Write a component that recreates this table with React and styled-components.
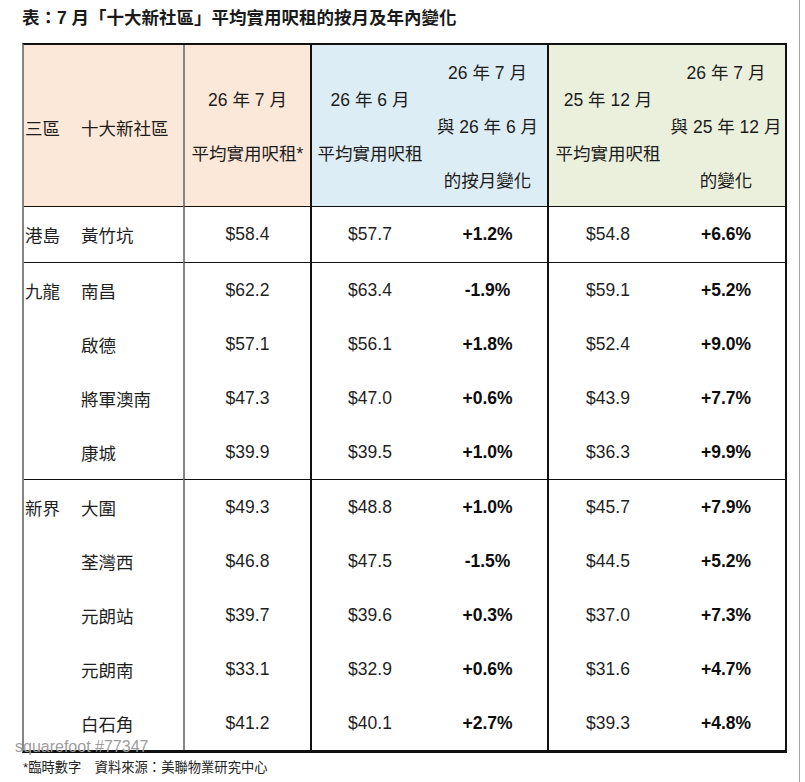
import styled, { createGlobalStyle } from 'styled-components';

const GlobalStyle = createGlobalStyle`
  html, body {
    margin: 0;
    padding: 0;
    background: #fff;
  }
  body {
    font-family: "Liberation Sans", "Noto Sans CJK TC", sans-serif;
    color: #222;
  }
`;

const tones = {
  peach: '#fce8d8',
  blue: '#dcedf5',
  green: '#ebf0dc',
};

const edges = {
  gray: '2px solid #858585',
  dark: '2px solid #111',
};

const Page = styled.div`
  position: relative;
  box-sizing: border-box;
  width: 800px;
  height: 782px;
  padding: 6px 0 0 22px;
  border-right: 1px solid #a5a5a5;
`;

const Title = styled.h1`
  margin: 0;
  font-size: 17.5px;
  line-height: 24px;
  font-weight: 700;
  color: #1a1a1a;
`;

const Table = styled.table`
  margin-top: 13px;
  width: 765px;
  table-layout: fixed;
  border-collapse: separate;
  border-spacing: 0;
  border-top: 2px solid #111;
  border-left: 2px solid #858585;
  border-right: 2px solid #111;
  border-bottom: 3px solid #111;
  font-size: 17.5px;
`;

const HeadCell = styled.th`
  height: 157px;
  padding: 4px 0 0;
  background: ${(p) => tones[p.$tone]};
  border-left: ${(p) => (p.$edge ? edges[p.$edge] : 'none')};
  border-bottom: 1px solid #111;
  font-weight: 400;
  color: #1c1c1c;
  text-align: ${(p) => (p.$left ? 'left' : 'center')};
  padding-left: ${(p) => (p.$left ? '1px' : '0')};
  vertical-align: middle;
  white-space: nowrap;
`;

const Lines = styled.div`
  display: flex;
  flex-direction: column;
  align-items: center;
  gap: 27px;
  line-height: 27px;
`;

const Cell = styled.td`
  height: ${(p) => (p.$tall ? 55 : 54)}px;
  padding: 0 0 0 ${(p) => (p.$left ? '1px' : '0')};
  border-left: ${(p) => (p.$edge ? edges[p.$edge] : 'none')};
  border-bottom: ${(p) => (p.$last ? '1px solid #111' : 'none')};
  text-align: ${(p) => (p.$left ? 'left' : 'center')};
  vertical-align: middle;
  white-space: nowrap;
  color: ${(p) => (p.$bold ? '#0d0d0d' : '#1f1f1f')};
  font-weight: ${(p) => (p.$bold ? 700 : 400)};
`;

const Note = styled.p`
  margin: 5px 0 0 1px;
  font-size: 13.3px;
  line-height: 20px;
  color: #222;
`;

const Watermark = styled.span`
  position: absolute;
  left: 15px;
  top: 737px;
  font-size: 16px;
  line-height: 19px;
  color: #9d9d9d;
`;

const groups = [
  {
    region: '港島',
    rows: [['黃竹坑', '$58.4', '$57.7', '+1.2%', '$54.8', '+6.6%']],
  },
  {
    region: '九龍',
    rows: [
      ['南昌', '$62.2', '$63.4', '-1.9%', '$59.1', '+5.2%'],
      ['啟德', '$57.1', '$56.1', '+1.8%', '$52.4', '+9.0%'],
      ['將軍澳南', '$47.3', '$47.0', '+0.6%', '$43.9', '+7.7%'],
      ['康城', '$39.9', '$39.5', '+1.0%', '$36.3', '+9.9%'],
    ],
  },
  {
    region: '新界',
    rows: [
      ['大圍', '$49.3', '$48.8', '+1.0%', '$45.7', '+7.9%'],
      ['荃灣西', '$46.8', '$47.5', '-1.5%', '$44.5', '+5.2%'],
      ['元朗站', '$39.7', '$39.6', '+0.3%', '$37.0', '+7.3%'],
      ['元朗南', '$33.1', '$32.9', '+0.6%', '$31.6', '+4.7%'],
      ['白石角', '$41.2', '$40.1', '+2.7%', '$39.3', '+4.8%'],
    ],
  },
];

const widths = [56, 103, 127, 118, 119, 120, 118];

export default function App() {
  return (
    <>
      <GlobalStyle />
      <Page>
        <Title>表：7 月「十大新社區」平均實用呎租的按月及年內變化</Title>
        <Table>
          <colgroup>
            {widths.map((w, i) => (
              <col key={i} style={{ width: w }} />
            ))}
          </colgroup>
          <thead>
            <tr>
              <HeadCell $tone="peach" $left>三區</HeadCell>
              <HeadCell $tone="peach" $left>十大新社區</HeadCell>
              <HeadCell $tone="peach" $edge="gray">
                <Lines>
                  <span>26 年 7 月</span>
                  <span>平均實用呎租*</span>
                </Lines>
              </HeadCell>
              <HeadCell $tone="blue" $edge="dark">
                <Lines>
                  <span>26 年 6 月</span>
                  <span>平均實用呎租</span>
                </Lines>
              </HeadCell>
              <HeadCell $tone="blue">
                <Lines>
                  <span>26 年 7 月</span>
                  <span>與 26 年 6 月</span>
                  <span>的按月變化</span>
                </Lines>
              </HeadCell>
              <HeadCell $tone="green" $edge="dark">
                <Lines>
                  <span>25 年 12 月</span>
                  <span>平均實用呎租</span>
                </Lines>
              </HeadCell>
              <HeadCell $tone="green">
                <Lines>
                  <span>26 年 7 月</span>
                  <span>與 25 年 12 月</span>
                  <span>的變化</span>
                </Lines>
              </HeadCell>
            </tr>
          </thead>
          <tbody>
            {groups.map((g) =>
              g.rows.map((r, i) => {
                const last = i === g.rows.length - 1 && g.region !== '新界';
                const tall = g.rows.length === 1;
                return (
                  <tr key={r[0]}>
                    <Cell $left $last={last} $tall={tall}>{i === 0 ? g.region : ''}</Cell>
                    <Cell $left $last={last} $tall={tall}>{r[0]}</Cell>
                    <Cell $edge="gray" $last={last} $tall={tall}>{r[1]}</Cell>
                    <Cell $edge="dark" $last={last} $tall={tall}>{r[2]}</Cell>
                    <Cell $bold $last={last} $tall={tall}>{r[3]}</Cell>
                    <Cell $edge="dark" $last={last} $tall={tall}>{r[4]}</Cell>
                    <Cell $bold $last={last} $tall={tall}>{r[5]}</Cell>
                  </tr>
                );
              })
            )}
          </tbody>
        </Table>
        <Note>*臨時數字　資料來源：美聯物業研究中心</Note>
        <Watermark>squarefoot #77347</Watermark>
      </Page>
    </>
  );
}
